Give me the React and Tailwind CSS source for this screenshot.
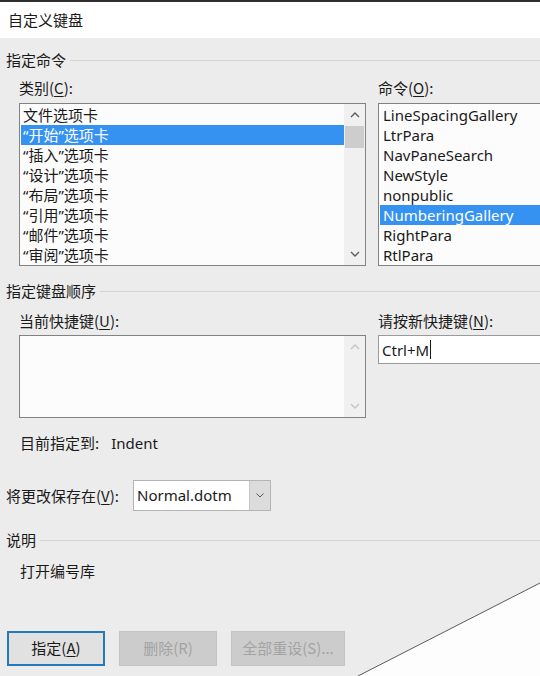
import React from 'react';

const cjk = { fontFamily: '"Noto Sans CJK SC", "Noto Sans", sans-serif' };
const latin = { fontFamily: '"Noto Sans", "Noto Sans CJK SC", sans-serif' };

// [quoted part, rest]; null quoted means no quotes
const categories = [
  [null, '文件选项卡'],
  ['开始', '选项卡'],
  ['插入', '选项卡'],
  ['设计', '选项卡'],
  ['布局', '选项卡'],
  ['引用', '选项卡'],
  ['邮件', '选项卡'],
  ['审阅', '选项卡'],
];

const commands = [
  'LineSpacingGallery',
  'LtrPara',
  'NavPaneSearch',
  'NewStyle',
  'nonpublic',
  'NumberingGallery',
  'RightPara',
  'RtlPara',
];

function Chevron({ up, faded }) {
  return (
    <svg width="10" height="6" viewBox="0 0 10 6" className="block">
      <path
        d={up ? 'M1 5 L5 1 L9 5' : 'M1 1 L5 5 L9 1'}
        fill="none"
        stroke={faded ? '#c4c4c4' : '#5a5a5a'}
        strokeWidth="1.4"
      />
    </svg>
  );
}

function GroupHeader({ children }) {
  return (
    <div className="flex items-center h-[20px] pl-[6px]">
      <span className="text-[15px] leading-[20px] text-[#1a1a1a]" style={cjk}>{children}</span>
      <div className="flex-1 h-px bg-[#d4d4d4] ml-[4px]" />
    </div>
  );
}

function Label({ text, hotkey, rest = '):' }) {
  return (
    <div className="text-[15px] leading-[20px] text-[#1a1a1a] whitespace-nowrap" style={cjk}>
      {text}(<span className="underline underline-offset-2">{hotkey}</span>{rest}
    </div>
  );
}

export default function App() {
  return (
    <div className="relative w-[540px] h-[676px] bg-[#ececec] overflow-hidden text-[#1a1a1a]">
      {/* title bar */}
      <div className="h-[38px] bg-white border-t-[2px] border-[#2e2e2e] flex items-center pl-[8px]">
        <span className="text-[15px] leading-[20px]" style={cjk}>自定义键盘</span>
      </div>

      <div className="pt-[12px]">
        <GroupHeader>指定命令</GroupHeader>

        <div className="flex mt-[8px]">
          <div className="ml-[19px] w-[347px]">
            <Label text="类别" hotkey="C" />
            <div className="mt-[5px] h-[163px] border border-[#828282] bg-[#fcfcfc] flex">
              <div className="flex-1 pt-[1px] pl-[1px]">
                {categories.map(([q, rest], i) => (
                  <div
                    key={rest + i}
                    className={`h-[20px] leading-[20px] text-[15px] pl-[2px] ${i === 1 ? 'bg-[#3592f0] text-white' : ''}`}
                    style={cjk}
                  >
                    {q ? (
                      <>
                        <span style={latin}>“</span>{q}<span style={latin}>”</span>
                      </>
                    ) : null}
                    {rest}
                  </div>
                ))}
              </div>
              <div className="w-[21px] bg-[#f0f0f0] flex flex-col items-center">
                <div className="h-[22px] flex items-center"><Chevron up /></div>
                <div className="w-[19px] h-[22px] bg-[#cdcdcd]" />
                <div className="flex-1" />
                <div className="h-[22px] flex items-center"><Chevron /></div>
              </div>
            </div>
          </div>

          <div className="ml-[12px] flex-1">
            <Label text="命令" hotkey="O" />
            <div className="mt-[5px] h-[163px] border border-r-0 border-[#828282] bg-[#fcfcfc] pt-[1px] pl-[1px]">
              {commands.map((c, i) => (
                <div
                  key={c}
                  className={`h-[20px] leading-[20px] text-[15px] pl-[3px] ${i === 5 ? 'bg-[#3592f0] text-white' : ''}`}
                  style={latin}
                >
                  {c}
                </div>
              ))}
            </div>
          </div>
        </div>

        <div className="mt-[15px]">
          <GroupHeader>指定键盘顺序</GroupHeader>
        </div>

        <div className="flex mt-[10px]">
          <div className="ml-[19px] w-[347px]">
            <Label text="当前快捷键" hotkey="U" />
            <div className="mt-[4px] h-[83px] border border-[#828282] bg-[#fcfcfc] flex">
              <div className="flex-1" />
              <div className="w-[21px] bg-[#f0f0f0] flex flex-col items-center">
                <div className="h-[22px] flex items-center"><Chevron up faded /></div>
                <div className="flex-1" />
                <div className="h-[22px] flex items-center"><Chevron faded /></div>
              </div>
            </div>
          </div>

          <div className="ml-[12px] flex-1">
            <Label text="请按新快捷键" hotkey="N" />
            <div className="mt-[4px] h-[29px] border border-r-0 border-[#9a9a9a] bg-white flex items-center pl-[3px]">
              <span className="text-[15px] leading-[20px]" style={latin}>Ctrl+M</span>
              <span className="w-px h-[19px] bg-[#1a1a1a] ml-[1px]" />
            </div>
          </div>
        </div>

        <div className="ml-[20px] mt-[15px] flex text-[15px] leading-[20px]" style={cjk}>
          <span>目前指定到:</span>
          <span className="ml-[12px]" style={latin}>Indent</span>
        </div>

        <div className="flex items-center mt-[27px] pl-[6px]">
          <Label text="将更改保存在" hotkey="V" />
          <div className="ml-[14px] w-[138px] h-[31px] border border-[#b4b4b4] bg-white flex">
            <div className="flex-1 flex items-center pl-[3px] text-[15px]" style={latin}>Normal.dotm</div>
            <div className="w-[21px] bg-[#dcdcdc] border-l border-[#c8c8c8] flex items-center justify-center">
              <svg width="8" height="5" viewBox="0 0 8 5"><path d="M0.5 0.5 L4 4 L7.5 0.5" fill="none" stroke="#555" strokeWidth="1" /></svg>
            </div>
          </div>
        </div>

        <div className="mt-[19px]">
          <GroupHeader>说明</GroupHeader>
        </div>

        <div className="ml-[20px] mt-[11px] text-[15px] leading-[20px]" style={cjk}>打开编号库</div>

        <div className="flex mt-[50px] pl-[7px] gap-[14px]">
          <div className="w-[98px] h-[35px] border-2 border-[#2877b8] bg-[#e1e1e1] flex items-center justify-center text-[15px]" style={cjk}>
            指定(<span className="underline underline-offset-2">A</span>)
          </div>
          <div className="w-[98px] h-[35px] border border-[#c4c4c4] bg-[#cccccc] text-[#a3a3a3] flex items-center justify-center text-[15px]" style={cjk}>
            删除(R)
          </div>
          <div className="w-[114px] h-[35px] border border-[#c4c4c4] bg-[#cccccc] text-[#a3a3a3] flex items-center justify-center text-[15px]" style={cjk}>
            全部重设(S)...
          </div>
        </div>
      </div>

      {/* torn corner of the screenshot */}
      <svg className="absolute left-0 top-0 pointer-events-none" width="540" height="676" viewBox="0 0 540 676">
        <polygon points="358,676 540,583 540,676" fill="#fdfdfd" />
        <line x1="358" y1="676" x2="540" y2="583" stroke="#5a5a5a" strokeWidth="1" />
      </svg>
    </div>
  );
}
